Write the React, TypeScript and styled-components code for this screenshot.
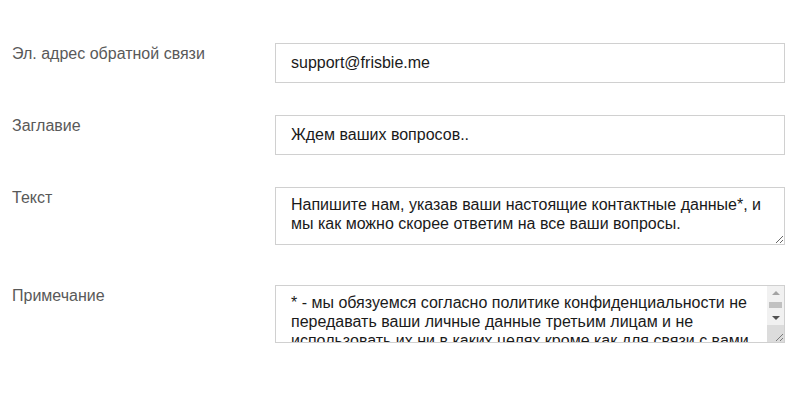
import React from "react";
import styled, { createGlobalStyle } from "styled-components";

const GlobalStyle = createGlobalStyle`
  body {
    margin: 0;
    background: #fff;
    font-family: "Liberation Sans", Arial, sans-serif;
  }
`;

const Form = styled.form`
  display: flex;
  flex-direction: column;
  padding: 43px 0 0 12px;
  width: 773px;
`;

const Row = styled.div<{ $gap: number }>`
  display: flex;
  align-items: flex-start;
  margin-bottom: ${(p) => p.$gap}px;
`;

const Label = styled.label`
  width: 263px;
  flex-shrink: 0;
  padding-top: 1px;
  font-size: 16px;
  line-height: 20px;
  color: #595959;
`;

const Input = styled.input`
  box-sizing: border-box;
  width: 510px;
  height: 40px;
  padding: 0 15px;
  border: 1px solid #d0d0d0;
  border-radius: 0;
  outline: none;
  font-family: "Liberation Sans", Arial, sans-serif;
  font-size: 16px;
  color: #1a1a1a;
  background: #fff;
`;

const Field = styled.div`
  position: relative;
  width: 510px;
  height: 58px;
`;

const TextArea = styled.textarea<{ $scroll?: boolean }>`
  display: block;
  box-sizing: border-box;
  width: 510px;
  height: 58px;
  padding: 7px ${(p) => (p.$scroll ? 24 : 15)}px 7px 15px;
  margin: 0;
  border: 1px solid #d0d0d0;
  border-radius: 0;
  outline: none;
  font-family: "Liberation Sans", Arial, sans-serif;
  font-size: 16px;
  line-height: 19px;
  color: #1a1a1a;
  background: #fff;
  resize: vertical;
`;

/* classic scrollbar drawn over the note field */
const Scrollbar = styled.div`
  position: absolute;
  top: 1px;
  right: 1px;
  bottom: 1px;
  width: 17px;
  display: flex;
  flex-direction: column;
  background: #f1f1f1;
`;

const Arrow = styled.div<{ $down?: boolean; $color: string }>`
  height: 14px;
  display: flex;
  align-items: center;
  justify-content: center;

  &::before {
    content: "";
    width: 0;
    height: 0;
    border-left: 4px solid transparent;
    border-right: 4px solid transparent;
    ${(p) =>
      p.$down
        ? `border-top: 4px solid ${p.$color};`
        : `border-bottom: 4px solid ${p.$color};`}
  }
`;

const Track = styled.div`
  flex: 1;
  padding: 2px 2px 0;
`;

const Thumb = styled.div`
  height: 6px;
  background: #c1c1c1;
`;

const Corner = styled.div`
  height: 17px;
  background: #dcdcdc;
  display: flex;
  align-items: flex-end;
  justify-content: flex-end;
`;

const Grip: React.FC = () => (
  <svg width="10" height="10" viewBox="0 0 10 10">
    <path d="M9 2 L2 9 M9 6 L6 9" stroke="#7a7a7a" strokeWidth="1" />
  </svg>
);

const App: React.FC = () => {
  return (
    <>
      <GlobalStyle />
      <Form>
        <Row $gap={32}>
          <Label>Эл. адрес обратной связи</Label>
          <Input defaultValue="support@frisbie.me" />
        </Row>
        <Row $gap={32}>
          <Label>Заглавие</Label>
          <Input defaultValue="Ждем ваших вопросов.." />
        </Row>
        <Row $gap={40}>
          <Label>Текст</Label>
          <TextArea defaultValue="Напишите нам, указав ваши настоящие контактные данные*, и мы как можно скорее ответим на все ваши вопросы." />
        </Row>
        <Row $gap={0}>
          <Label>Примечание</Label>
          <Field>
            <TextArea
              $scroll
              defaultValue="* - мы обязуемся согласно политике конфиденциальности не передавать ваши личные данные третьим лицам и не использовать их ни в каких целях кроме как для связи с вами."
            />
            <Scrollbar>
              <Arrow $color="#a3a3a3" />
              <Track>
                <Thumb />
              </Track>
              <Arrow $down $color="#505050" />
              <Corner>
                <Grip />
              </Corner>
            </Scrollbar>
          </Field>
        </Row>
      </Form>
    </>
  );
};

export default App;
